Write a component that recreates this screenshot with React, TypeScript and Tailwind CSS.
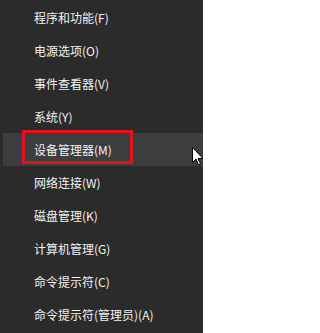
import React from "react";

const items = [
  "程序和功能(F)",
  "电源选项(O)",
  "事件查看器(V)",
  "系统(Y)",
  "设备管理器(M)",
  "网络连接(W)",
  "磁盘管理(K)",
  "计算机管理(G)",
  "命令提示符(C)",
  "命令提示符(管理员)(A)",
];

function Cursor() {
  return (
    <svg width="12" height="19" viewBox="0 0 12 19" className="absolute right-[-1px] top-[14px]">
      <path d="M0.5 0.5 L0.5 15.5 L4 12 L6.5 18 L8.5 17 L6 11.5 L11 11.5 Z" fill="#fff" stroke="#000" strokeWidth="1" />
    </svg>
  );
}

export default function App() {
  return (
    <div
      className="w-[203px] h-[333px] overflow-hidden bg-[#2b2b2b] pt-[1px]"
      style={{ fontFamily: '"Noto Sans CJK SC", sans-serif' }}
    >
      {items.map((label, i) => {
        const active = i === 4;
        return (
          <div
            key={label}
            className={
              active
                ? "relative ml-[3px] flex h-[33px] items-center bg-[#3d3d3d] pl-[31px] text-[12px] text-[#f2f2f2]"
                : "relative flex h-[33px] items-center pl-[34px] text-[12px] text-[#f2f2f2]"
            }
          >
            <span>{label}</span>
            {active && (
              <>
                <div className="absolute left-[19px] top-[-3px] h-[34px] w-[111px] border-[3px] border-[#e3131b]" />
                <Cursor />
              </>
            )}
          </div>
        );
      })}
    </div>
  );
}
